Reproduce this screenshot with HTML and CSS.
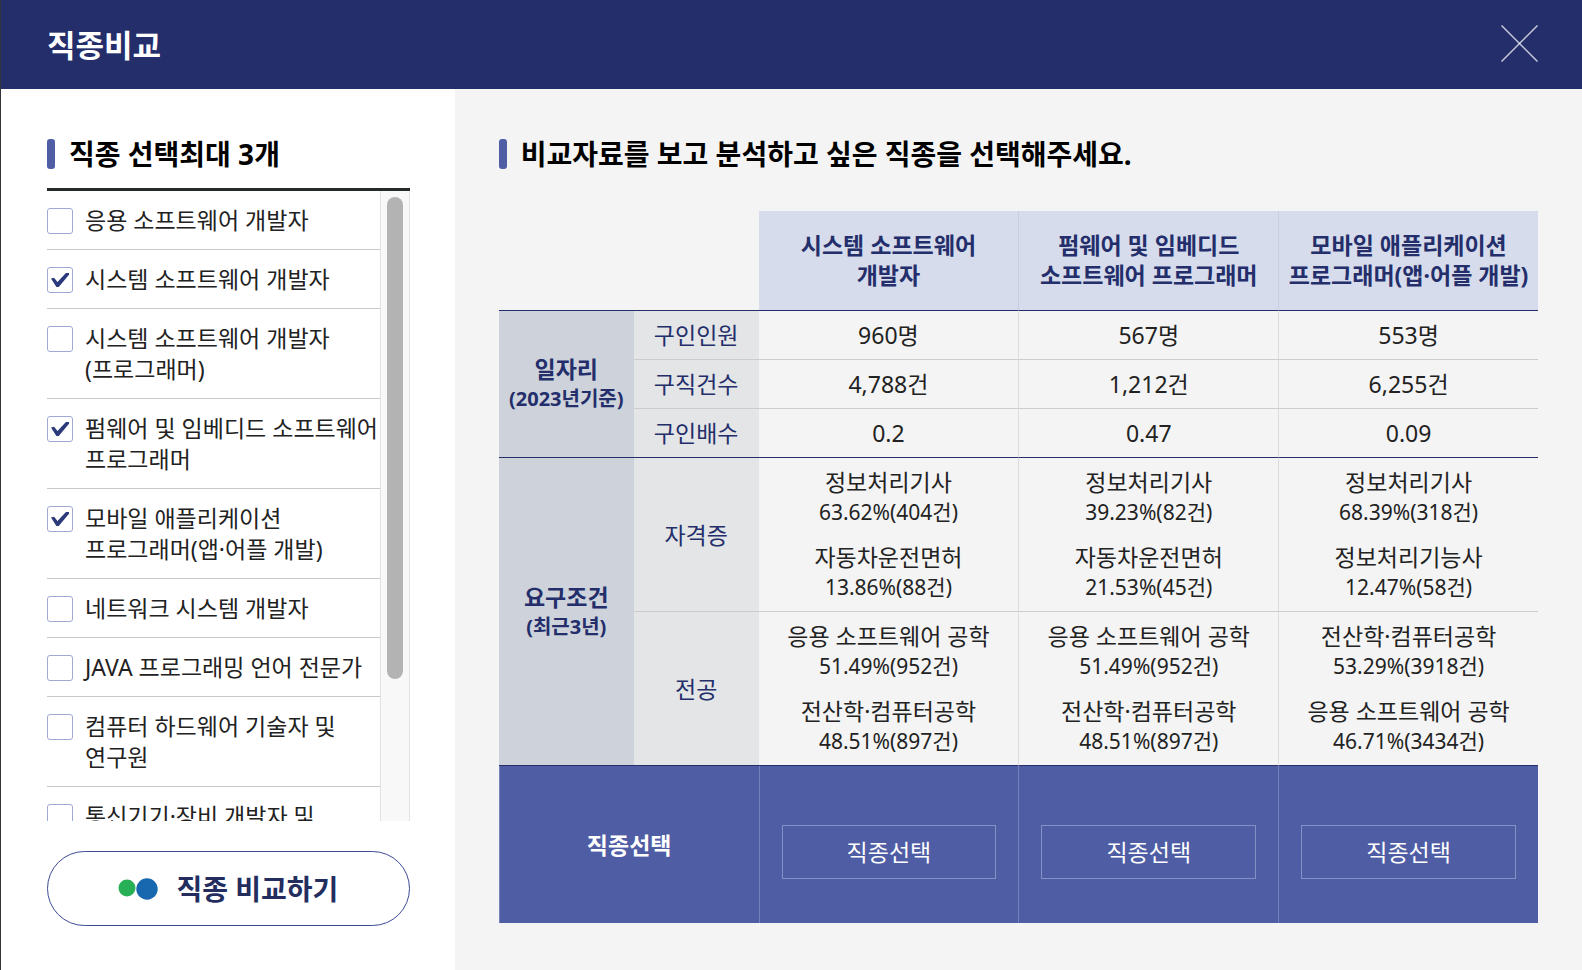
FILE: index.html
```html
<!DOCTYPE html>
<html lang="ko">
<head>
    <meta charset="UTF-8">
    <meta name="viewport" content="width=device-width, initial-scale=1">
    <title>직종비교</title>
    <link rel="stylesheet" href="styles.css">
</head>
<body>
    <header class="header">
        <h1>직종비교</h1>
        <button type="button" class="close-btn" aria-label="닫기">
            <svg width="37" height="37" viewBox="0 0 37 37" aria-hidden="true">
                <path d="M0.5 0.5L36.5 36.5" />
                <path d="M36.5 0.5L0.5 36.5" />
            </svg>
        </button>
    </header>

    <div class="content">
        <form class="sidebar">
            <h2 class="title">직종 선택최대 3개</h2>
            <div class="job-box">
                <ul class="job-list" id="jobList">
                    <li><label><input type="checkbox"><span>응용 소프트웨어 개발자</span></label></li>
                    <li><label><input type="checkbox" checked><span>시스템 소프트웨어 개발자</span></label></li>
                    <li><label><input type="checkbox"><span>시스템 소프트웨어 개발자 (프로그래머)</span></label></li>
                    <li><label><input type="checkbox" checked><span>펌웨어 및 임베디드 소프트웨어 프로그래머</span></label></li>
                    <li><label><input type="checkbox" checked><span>모바일 애플리케이션 프로그래머(앱·어플 개발)</span></label></li>
                    <li><label><input type="checkbox"><span>네트워크 시스템 개발자</span></label></li>
                    <li><label><input type="checkbox"><span>JAVA 프로그래밍 언어 전문가</span></label></li>
                    <li><label><input type="checkbox"><span>컴퓨터 하드웨어 기술자 및 연구원</span></label></li>
                    <li><label><input type="checkbox"><span>통신기기·장비 개발자 및 연구원</span></label></li>
                </ul>
                <div class="scroll-track" id="scrollTrack">
                    <div class="scroll-thumb" id="scrollThumb"></div>
                </div>
            </div>
            <button type="button" class="compare-btn">
                <svg width="40" height="22" viewBox="0 0 40 22" aria-hidden="true">
                    <circle cx="9" cy="10" r="8.5" fill="#27b056" />
                    <circle cx="29" cy="11" r="10.7" fill="#1868b0" />
                </svg>
                직종 비교하기
            </button>
        </form>

        <main class="main">
            <h2 class="title">비교자료를 보고 분석하고 싶은 직종을 선택해주세요.</h2>
            <table class="compare">
                <colgroup>
                    <col class="col-group">
                    <col class="col-item">
                    <col class="col-job">
                    <col class="col-job">
                    <col class="col-job">
                </colgroup>
                <thead>
                    <tr>
                        <td colspan="2"></td>
                        <th scope="col">시스템 소프트웨어<br>개발자</th>
                        <th scope="col">펌웨어 및 임베디드<br>소프트웨어 프로그래머</th>
                        <th scope="col">모바일 애플리케이션<br>프로그래머(앱·어플 개발)</th>
                    </tr>
                </thead>
                <tbody>
                    <tr>
                        <th scope="rowgroup" rowspan="3" class="group">일자리<small>(2023년기준)</small></th>
                        <th scope="row">구인인원</th>
                        <td>960명</td>
                        <td>567명</td>
                        <td>553명</td>
                    </tr>
                    <tr>
                        <th scope="row">구직건수</th>
                        <td>4,788건</td>
                        <td>1,212건</td>
                        <td>6,255건</td>
                    </tr>
                    <tr>
                        <th scope="row">구인배수</th>
                        <td>0.2</td>
                        <td>0.47</td>
                        <td>0.09</td>
                    </tr>
                </tbody>
                <tbody>
                    <tr>
                        <th scope="rowgroup" rowspan="2" class="group">요구조건<small>(최근3년)</small></th>
                        <th scope="row">자격증</th>
                        <td>
                            <p>정보처리기사<small>63.62%(404건)</small></p>
                            <p>자동차운전면허<small>13.86%(88건)</small></p>
                        </td>
                        <td>
                            <p>정보처리기사<small>39.23%(82건)</small></p>
                            <p>자동차운전면허<small>21.53%(45건)</small></p>
                        </td>
                        <td>
                            <p>정보처리기사<small>68.39%(318건)</small></p>
                            <p>정보처리기능사<small>12.47%(58건)</small></p>
                        </td>
                    </tr>
                    <tr>
                        <th scope="row">전공</th>
                        <td>
                            <p>응용 소프트웨어 공학<small>51.49%(952건)</small></p>
                            <p>전산학·컴퓨터공학<small>48.51%(897건)</small></p>
                        </td>
                        <td>
                            <p>응용 소프트웨어 공학<small>51.49%(952건)</small></p>
                            <p>전산학·컴퓨터공학<small>48.51%(897건)</small></p>
                        </td>
                        <td>
                            <p>전산학·컴퓨터공학<small>53.29%(3918건)</small></p>
                            <p>응용 소프트웨어 공학<small>46.71%(3434건)</small></p>
                        </td>
                    </tr>
                </tbody>
                <tfoot>
                    <tr>
                        <th scope="row" colspan="2">직종선택</th>
                        <td><button type="button" class="select-btn">직종선택</button></td>
                        <td><button type="button" class="select-btn">직종선택</button></td>
                        <td><button type="button" class="select-btn">직종선택</button></td>
                    </tr>
                </tfoot>
            </table>
        </main>
    </div>

    <script>
        const jobList = document.getElementById('jobList');
        const track = document.getElementById('scrollTrack');
        const thumb = document.getElementById('scrollThumb');

        // Move the thumb with the list
        jobList.addEventListener('scroll', () => {
            const ratio = jobList.scrollTop / (jobList.scrollHeight - jobList.clientHeight);
            const room = track.clientHeight - 12 - thumb.offsetHeight;
            thumb.style.marginTop = `${ratio * room}px`;
        });

        // No more than 3 jobs at a time
        jobList.addEventListener('change', (e) => {
            if (jobList.querySelectorAll('input:checked').length > 3) {
                e.target.checked = false;
            }
        });
    </script>
</body>
</html>
```

FILE: styles.css
```css
* {
    box-sizing: border-box;
}
body {
    display: flex;
    flex-direction: column;
    height: 100vh;
    margin: 0;
    border-left: 1px solid #33343a;
    font-family: "Noto Sans", "Noto Sans CJK KR", sans-serif;
    font-size: 23px;
    line-height: 30px;
    color: #222;
    word-break: keep-all;
}
h1, h2, p, ul {
    margin: 0;
    padding: 0;
}
button {
    font: inherit;
    cursor: pointer;
}
small {
    display: block;
    font-size: 20px;
}

/* header */
.header {
    display: flex;
    flex-shrink: 0;
    justify-content: space-between;
    align-items: center;
    height: 89px;
    padding: 0 44px 0 46px;
    background: #232e6b;
    color: #fff;
}
.header h1 {
    font-size: 31px;
    line-height: 44px;
}
.close-btn {
    display: flex;
    padding: 0 0 3px;
    border: none;
    background: none;
}
.close-btn path {
    fill: none;
    stroke: #fff;
    stroke-width: 1.5;
    stroke-opacity: 0.75;
}

.content {
    display: flex;
    flex: 1;
    min-height: 0;
}
.title {
    display: flex;
    align-items: center;
    gap: 14px;
    font-size: 28px;
    line-height: 30px;
    color: #000;
}
.title::before {
    content: "";
    width: 8px;
    height: 30px;
    border-radius: 3px;
    background: #4f5da5;
}

/* job list */
.sidebar {
    display: flex;
    flex-direction: column;
    width: 28.7%;
    padding: 50px 45px 44px 46px;
    background: #fff;
}
.job-box {
    display: flex;
    flex: 1;
    min-height: 0;
    margin: 19px 0 30px;
    border-top: 3px solid #262a29;
}
.job-list {
    flex: 1;
    overflow-y: auto;
    scrollbar-width: none;
    list-style: none;
}
.job-list li {
    border-bottom: 1px solid #c8c8c8;
}
.job-list label {
    display: flex;
    align-items: flex-start;
    gap: 12px;
    padding: 14px 0 13px;
    line-height: 31px;
}
.job-list input {
    display: flex;
    flex-shrink: 0;
    justify-content: center;
    align-items: center;
    width: 26px;
    height: 26px;
    margin: 3px 0 0;
    appearance: none;
    border: 1px solid #a0a8d6;
    border-radius: 3px;
    background: #fff;
}
.job-list input:checked::before {
    content: "";
    width: 18px;
    height: 14px;
    background: #2c3a7c;
    clip-path: polygon(0 39%, 17% 34%, 36% 65%, 83% 0, 100% 0, 100% 12%, 43% 100%, 30% 100%);
}
.scroll-track {
    flex: 0 0 30px;
    padding: 6px;
    border-left: 1px solid #e2e2e2;
    border-right: 1px solid #e2e2e2;
    background: #f8f8f8;
}
.scroll-thumb {
    height: 78%;
    border-radius: 8px;
    background: #b3b3b3;
}
.compare-btn {
    display: flex;
    justify-content: center;
    align-items: center;
    gap: 18px;
    height: 75px;
    border: 1px solid #3d4b96;
    border-radius: 38px;
    background: #fff;
    color: #232e5f;
    font-size: 28px;
    font-weight: bold;
}

/* compare table */
.main {
    flex: 1;
    min-width: 0;
    padding: 50px 44px 44px;
    background: #f4f4f4;
}
.compare {
    width: 100%;
    margin-top: 42px;
    table-layout: fixed;
    border-collapse: separate;
    border-spacing: 0;
    text-align: center;
}
.col-group {
    width: 13%;
}
.col-item {
    width: 12%;
}
.col-job {
    width: 25%;
}
.compare th, .compare td {
    padding: 9px 0;
    border-bottom: 1px solid #ccc;
}
.compare td + td, .compare th + th {
    border-left: 1px solid #dcdcdc;
}
.compare thead th, .compare thead td {
    padding: 19px 0 20px;
    border-bottom-color: #232e6b;
}
.compare thead th {
    background: #d6dceb;
    color: #232e6b;
}
.compare thead th + th {
    border-left-color: #c8cede;
}
.compare tbody th {
    background: #e4e5e6;
    color: #232e6b;
    font-weight: normal;
}
.compare tbody .group {
    background: #ced3db;
    font-weight: bold;
}
.compare tbody .group + th {
    border-left: none;
}
.compare tbody .group,
.compare tbody tr:last-child > * {
    border-bottom-color: #232e6b;
}
.compare p + p {
    margin-top: 15px;
}
.compare p small {
    font-size: 21px;
}
.compare tfoot th, .compare tfoot td {
    padding: 59px 22px 44px;
    border-bottom: none;
    border-left: 1px solid #7682bb;
    background: #4f5da5;
    color: #fff;
}
.compare tfoot th {
    padding: 0;
}
.select-btn {
    display: block;
    width: 100%;
    height: 54px;
    border: 1px solid #8490c4;
    background: none;
    color: #fff;
}
```
